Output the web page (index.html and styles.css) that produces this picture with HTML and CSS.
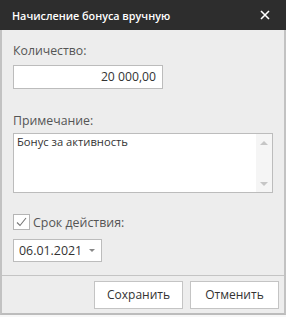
FILE: index.html
```html
<!DOCTYPE html>
<html lang="ru">
<head>
<meta charset="utf-8">
<link rel="stylesheet" href="styles.css">
</head>
<body>
<div class="dialog">
  <div class="header">
    <span class="title">Начисление бонуса вручную</span>
    <svg class="close" width="10" height="10" viewBox="0 0 10 10"><path d="M1 1L9 9M9 1L1 9" stroke="#fff" stroke-width="1.6"/></svg>
  </div>
  <div class="content">
    <div class="label first">Количество:</div>
    <div class="input amount">20 000,00</div>
    <div class="label second">Примечание:</div>
    <div class="textarea">
      <div class="ta-text">Бонус за активность</div>
      <div class="scroll"><span class="up"></span><span class="down"></span></div>
    </div>
    <div class="check-row">
      <span class="checkbox"><svg width="13" height="12" viewBox="0 0 13 12"><path d="M2 6.5L5 9.5L11 2" fill="none" stroke="#777" stroke-width="1.1"/></svg></span>
      <span class="check-label">Срок действия:</span>
    </div>
    <div class="date"><span>06.01.2021</span><span class="caret"></span></div>
  </div>
  <div class="footer">
    <button class="btn">Сохранить</button>
    <button class="btn">Отменить</button>
  </div>
</div>
</body>
</html>
```
FILE: styles.css
```css
* { box-sizing: border-box; }
html, body { margin: 0; padding: 0; background: #f7f7f7; }
body { font-family: "Open Sans", "Noto Sans", sans-serif; }
.dialog {
  width: 286px;
  background: #ededed;
  border-left: 2px solid #c2c2c2;
  border-right: 2px solid #c2c2c2;
  border-bottom: 2px solid #bcbcbc;
}
.header {
  height: 30px;
  margin: 0 -2px;
  background: #2d2d2d;
  display: flex;
  align-items: center;
  justify-content: space-between;
  padding: 0 16px 0 12px;
}
.title { color: #fff; font-size: 10.8px; font-weight: 600; }
.close { display: block; }
.content { padding: 12px 11px 0 11px; height: 245px; }
.label { font-size: 12.3px; line-height: 18px; color: #555; }
.input {
  margin-top: 5px;
  width: 150px; height: 24px;
  border: 1px solid #bcbcbc;
  background: #fff;
  font-size: 12.2px; line-height: 22px; color: #333;
  text-align: right; padding-right: 6px;
}
.second { margin-top: 23px; }
.textarea {
  margin-top: 3px;
  width: 260px; height: 60px;
  border: 1px solid #bcbcbc;
  background: #fff;
  display: flex;
}
.ta-text { flex: 1; font-size: 11.2px; line-height: 16px; color: #333; padding: 0 3px; }
.scroll { width: 16px; background: #f5f5f5; position: relative; }
.up, .down { position: absolute; left: 4px; width: 0; height: 0; border-left: 4px solid transparent; border-right: 4px solid transparent; }
.up { top: 7px; border-bottom: 4px solid #c6c6c6; }
.down { bottom: 6px; border-top: 4px solid #c6c6c6; }
.check-row { margin-top: 21px; display: flex; align-items: center; height: 16px; }
.checkbox { width: 17px; height: 16px; border: 1px solid #b5b5b5; background: #fff; display: flex; align-items: center; justify-content: center; }
.check-label { margin-left: 3px; font-size: 12.4px; color: #555; }
.date {
  margin-top: 9px;
  width: 89px; height: 23px;
  border: 1px solid #bcbcbc;
  background: #fff;
  display: flex; align-items: center; justify-content: space-between;
  padding: 0 6px 0 5px;
  font-size: 12.4px; color: #333;
}
.caret { width: 0; height: 0; border-left: 3px solid transparent; border-right: 3px solid transparent; border-top: 3px solid #888; }
.footer {
  border-top: 1px solid #c4c4c4;
  height: 38px;
  display: flex; justify-content: flex-end; align-items: center;
  gap: 7px; padding-right: 5px;
}
.btn {
  width: 89px; height: 28px;
  background: #fff; border: 1px solid #c4c4c4;
  font-family: inherit; font-size: 12px; color: #333;
  padding: 0;
}
```
